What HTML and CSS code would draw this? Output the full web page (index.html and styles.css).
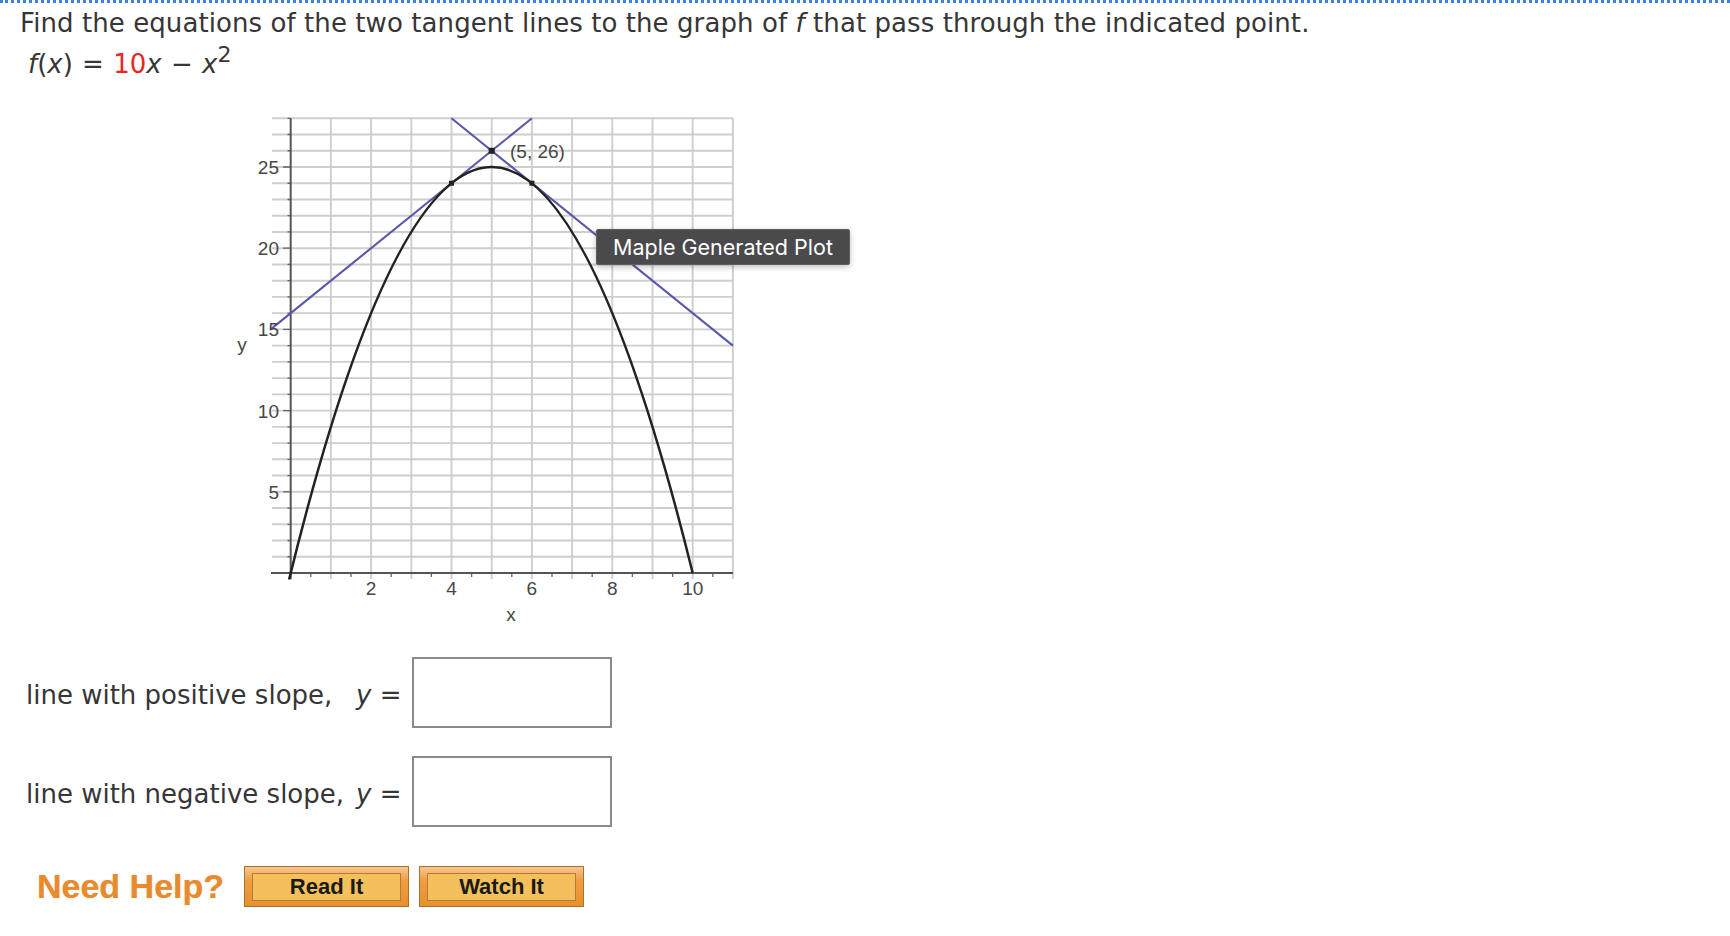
FILE: index.html
```html
<!DOCTYPE html>
<html>
<head>
<meta charset="utf-8">
<title>Tangent lines</title>
<link rel="stylesheet" href="styles.css">
</head>
<body>
<div class="question">
  <p class="prompt">Find the equations of the two tangent lines to the graph of <i>f</i> that pass through the indicated point.</p>
  <p class="func"><i>f</i>(<i>x</i>) = <span class="red">10</span><i>x</i> &minus; <i>x</i><sup>2</sup></p>

  <div class="plot">
    <svg class="graph" width="520" height="530" viewBox="0 0 520 530" xmlns="http://www.w3.org/2000/svg">
      <g class="grid">
        <path d="M42 457.76H503M42 441.52H503M42 425.28H503M42 409.04H503M42 392.8H503M42 376.56H503M42 360.32H503M42 344.08H503M42 327.84H503M42 311.6H503M42 295.36H503M42 279.12H503M42 262.88H503M42 246.64H503M42 230.4H503M42 214.16H503M42 197.92H503M42 181.68H503M42 165.44H503M42 149.2H503M42 132.96H503M42 116.72H503M42 100.48H503M42 84.24H503M42 68H503M42 51.76H503M42 35.52H503M42 19.28H503"/>
        <path d="M100.9 19.3V480M141.1 19.3V480M181.3 19.3V480M221.5 19.3V480M261.7 19.3V480M301.9 19.3V480M342.1 19.3V480M382.3 19.3V480M422.5 19.3V480M462.7 19.3V480M502.9 19.3V480"/>
      </g>
      <g class="ticks">
        <path d="M80.8 474v4M121 474v4M161.2 474v4M201.4 474v4M241.6 474v4M281.8 474v4M322 474v4M362.2 474v4M402.4 474v4M442.6 474v4M482.8 474v4"/>
        <path d="M57.5 457.76h3.2M57.5 441.52h3.2M57.5 425.28h3.2M57.5 409.04h3.2M57.5 376.56h3.2M57.5 360.32h3.2M57.5 344.08h3.2M57.5 327.84h3.2M57.5 295.36h3.2M57.5 279.12h3.2M57.5 262.88h3.2M57.5 246.64h3.2M57.5 214.16h3.2M57.5 197.92h3.2M57.5 181.68h3.2M57.5 165.44h3.2M57.5 132.96h3.2M57.5 116.72h3.2M57.5 100.48h3.2M57.5 84.24h3.2M57.5 51.76h3.2M57.5 35.52h3.2M57.5 19.28h3.2"/>
        <path d="M53 392.8h7.7M53 311.6h7.7M53 230.4h7.7M53 149.2h7.7M53 68h7.7"/>
      </g>
      <g class="axes">
        <path d="M41 474H503"/>
        <path d="M60.7 19.3V480"/>
      </g>
      <g class="tangent">
        <path d="M40.6 230.4L301.9 19.3"/>
        <path d="M221.5 19.3L502.9 246.6"/>
      </g>
      <path class="curve" d="M59.1 480.5Q260.9 -341.2 462.7 474"/>
      <g class="pts">
        <rect x="258.7" y="48.8" width="6" height="6"/>
        <rect x="219" y="81.7" width="5" height="5"/>
        <rect x="299.4" y="81.7" width="5" height="5"/>
      </g>
      <g class="labels">
        <text x="49" y="75" text-anchor="end">25</text>
        <text x="49" y="156.2" text-anchor="end">20</text>
        <text x="49" y="237.4" text-anchor="end">15</text>
        <text x="49" y="318.6" text-anchor="end">10</text>
        <text x="49" y="399.8" text-anchor="end">5</text>
        <text x="141.1" y="496" text-anchor="middle">2</text>
        <text x="221.5" y="496" text-anchor="middle">4</text>
        <text x="301.9" y="496" text-anchor="middle">6</text>
        <text x="382.3" y="496" text-anchor="middle">8</text>
        <text x="462.7" y="496" text-anchor="middle">10</text>
        <text x="281" y="522" text-anchor="middle">x</text>
        <text x="12" y="252" text-anchor="middle">y</text>
        <text x="280" y="59">(5, 26)</text>
      </g>
    </svg>
    <div class="tooltip">Maple Generated Plot</div>
  </div>

  <div class="answers">
    <span class="lbl">line with positive slope,</span>
    <span class="eq"><i>y</i> =</span>
    <span class="box"></span>
    <span class="lbl">line with negative slope,</span>
    <span class="eq"><i>y</i> =</span>
    <span class="box"></span>
  </div>

  <div class="help">
    <span class="need">Need Help?</span>
    <span class="btn"><span class="btn-in">Read It</span></span>
    <span class="btn"><span class="btn-in">Watch It</span></span>
  </div>
</div>
</body>
</html>
```

FILE: styles.css
```css
html, body {
  margin: 0;
  padding: 0;
  background: #ffffff;
}

body {
  font-family: "DejaVu Sans", Verdana, sans-serif;
  color: #363636;
}

.question {
  border-top: 3px dotted #3d7fe2;
}

.prompt {
  margin: 5px 0 0 20px;
  font-size: 26px;
  line-height: 30px;
  letter-spacing: 0.08px;
}

.func {
  margin: 11px 0 0 28px;
  font-size: 26px;
  line-height: 30px;
  word-spacing: 1px;
}

.func sup {
  font-size: 22px;
  line-height: 0;
  position: relative;
  top: -1px;
  vertical-align: super;
}

.red {
  color: #e6261f;
}

.plot {
  position: relative;
  margin: 20px 0 0 230px;
  width: 520px;
  height: 530px;
}

.graph {
  display: block;
}

.grid path {
  fill: none;
  stroke: #cecece;
  stroke-width: 1.9;
}

.ticks path {
  fill: none;
  stroke: #666666;
  stroke-width: 1.3;
}

.axes path {
  fill: none;
  stroke: #555555;
  stroke-width: 2;
}

.tangent path {
  fill: none;
  stroke: #5a58aa;
  stroke-width: 2.1;
}

.curve {
  fill: none;
  stroke: #222222;
  stroke-width: 2.5;
}

.pts rect {
  fill: #222222;
}

.labels text {
  font-family: "Liberation Sans", Arial, sans-serif;
  font-size: 19px;
  fill: #474747;
}

.tooltip {
  position: absolute;
  left: 366px;
  top: 130px;
  width: 254px;
  height: 36px;
  box-sizing: border-box;
  background: #4a4a4d;
  border: 1px solid #5e5e60;
  border-radius: 2px;
  box-shadow: 0 2px 6px rgba(0, 0, 0, 0.25);
  color: #ffffff;
  font-family: Inter, "Liberation Sans", sans-serif;
  font-size: 21.5px;
  line-height: 34px;
  text-align: center;
}

.answers {
  display: grid;
  grid-template-columns: max-content max-content 200px;
  column-gap: 11px;
  row-gap: 28px;
  align-items: center;
  margin: 28px 0 0 26px;
  font-size: 26px;
}

.lbl {
  margin-right: 1px;
  position: relative;
  top: 2px;
}

.eq {
  position: relative;
  top: 2px;
}

.box {
  height: 71px;
  box-sizing: border-box;
  border: 2px solid #8a8a8a;
  background: #ffffff;
}

.help {
  display: flex;
  align-items: center;
  margin: 39px 0 0 37px;
}

.need {
  font-family: "Liberation Sans", Arial, sans-serif;
  font-weight: bold;
  font-size: 34px;
  color: #e88a2e;
  text-shadow: 0 0 1px rgba(232, 138, 46, 0.6);
  margin-right: 20px;
}

.btn {
  display: flex;
  width: 165px;
  height: 41px;
  box-sizing: border-box;
  margin-right: 10px;
  padding: 6px 7px 5px;
  border: 1px solid #a8732f;
  background: linear-gradient(#f8c690 0%, #ee9d40 35%, #e8912f 100%);
}

.btn-in {
  flex: 1;
  display: flex;
  align-items: center;
  justify-content: center;
  border: 1px solid #b47a36;
  background: #f3c05c;
  font-family: "Liberation Sans", Arial, sans-serif;
  font-weight: bold;
  font-size: 22px;
  color: #1a1a1a;
}
```
